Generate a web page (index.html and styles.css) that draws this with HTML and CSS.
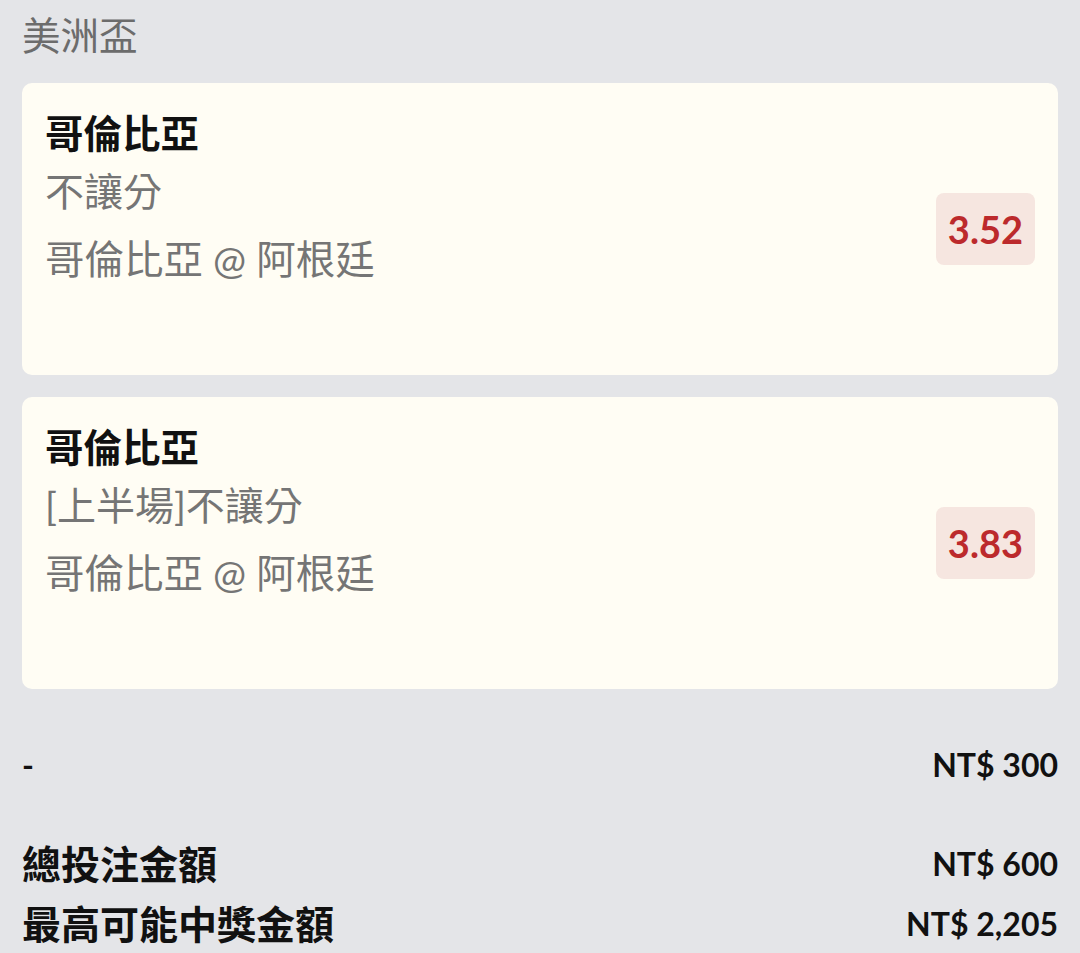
FILE: index.html
```html
<!DOCTYPE html>
<html>
<head>
  <meta charset="utf-8">
  <title>美洲盃</title>
  <link rel="stylesheet" href="styles.css">
</head>
<body>
  <h2 class="league">美洲盃</h2>

  <div class="bet-card">
    <div class="bet-info">
      <div class="bet-team">哥倫比亞</div>
      <div class="bet-market">不讓分</div>
      <div class="bet-match">哥倫比亞 @ 阿根廷</div>
    </div>
    <div class="bet-odds">3.52</div>
  </div>

  <div class="bet-card">
    <div class="bet-info">
      <div class="bet-team">哥倫比亞</div>
      <div class="bet-market">[上半場]不讓分</div>
      <div class="bet-match">哥倫比亞 @ 阿根廷</div>
    </div>
    <div class="bet-odds">3.83</div>
  </div>

  <div class="stake-row">
    <span>-</span>
    <span>NT$ 300</span>
  </div>

  <div class="summary">
    <div class="summary-row">
      <span>總投注金額</span>
      <span>NT$ 600</span>
    </div>
    <div class="summary-row">
      <span>最高可能中獎金額</span>
      <span>NT$ 2,205</span>
    </div>
  </div>
</body>
</html>
```

FILE: styles.css
```css
body {
  font-family: "Lato", "Noto Sans CJK TC", sans-serif;
  margin: 0;
  padding: 0 22px;
  background-color: #e4e5e8;
  color: #111;
}

.league {
  margin: 0 0 13px;
  font-size: 38.5px;
  font-weight: 400;
  line-height: 70px;
  color: #6c6c6c;
}

.bet-card {
  display: flex;
  align-items: center;
  justify-content: space-between;
  box-sizing: border-box;
  height: 292px;
  margin-bottom: 22px;
  padding: 22px 23px 78px 23px;
  background-color: #fffdf4;
  border-radius: 10px;
}

.bet-info {
  align-self: flex-start;
}

.bet-team {
  font-size: 38.5px;
  font-weight: 700;
  line-height: 56px;
}

.bet-market {
  font-size: 39px;
  line-height: 60px;
  color: #757575;
}

.bet-match {
  font-size: 39.5px;
  line-height: 76px;
  color: #757575;
}

.bet-odds {
  margin-top: 56px;
  padding: 0 12px;
  height: 72px;
  line-height: 72px;
  font-size: 38px;
  font-weight: 700;
  color: #bc2a2c;
  background-color: #f6e6e0;
  border-radius: 8px;
}

.stake-row,
.summary-row {
  display: flex;
  justify-content: space-between;
  align-items: center;
  font-weight: 700;
}

.stake-row {
  margin-top: 54px;
  font-size: 32px;
  line-height: 44px;
}

.summary {
  margin-top: 47px;
}

.summary-row {
  font-size: 39px;
  line-height: 60px;
}

.summary-row span:last-child {
  font-size: 32px;
}
```
